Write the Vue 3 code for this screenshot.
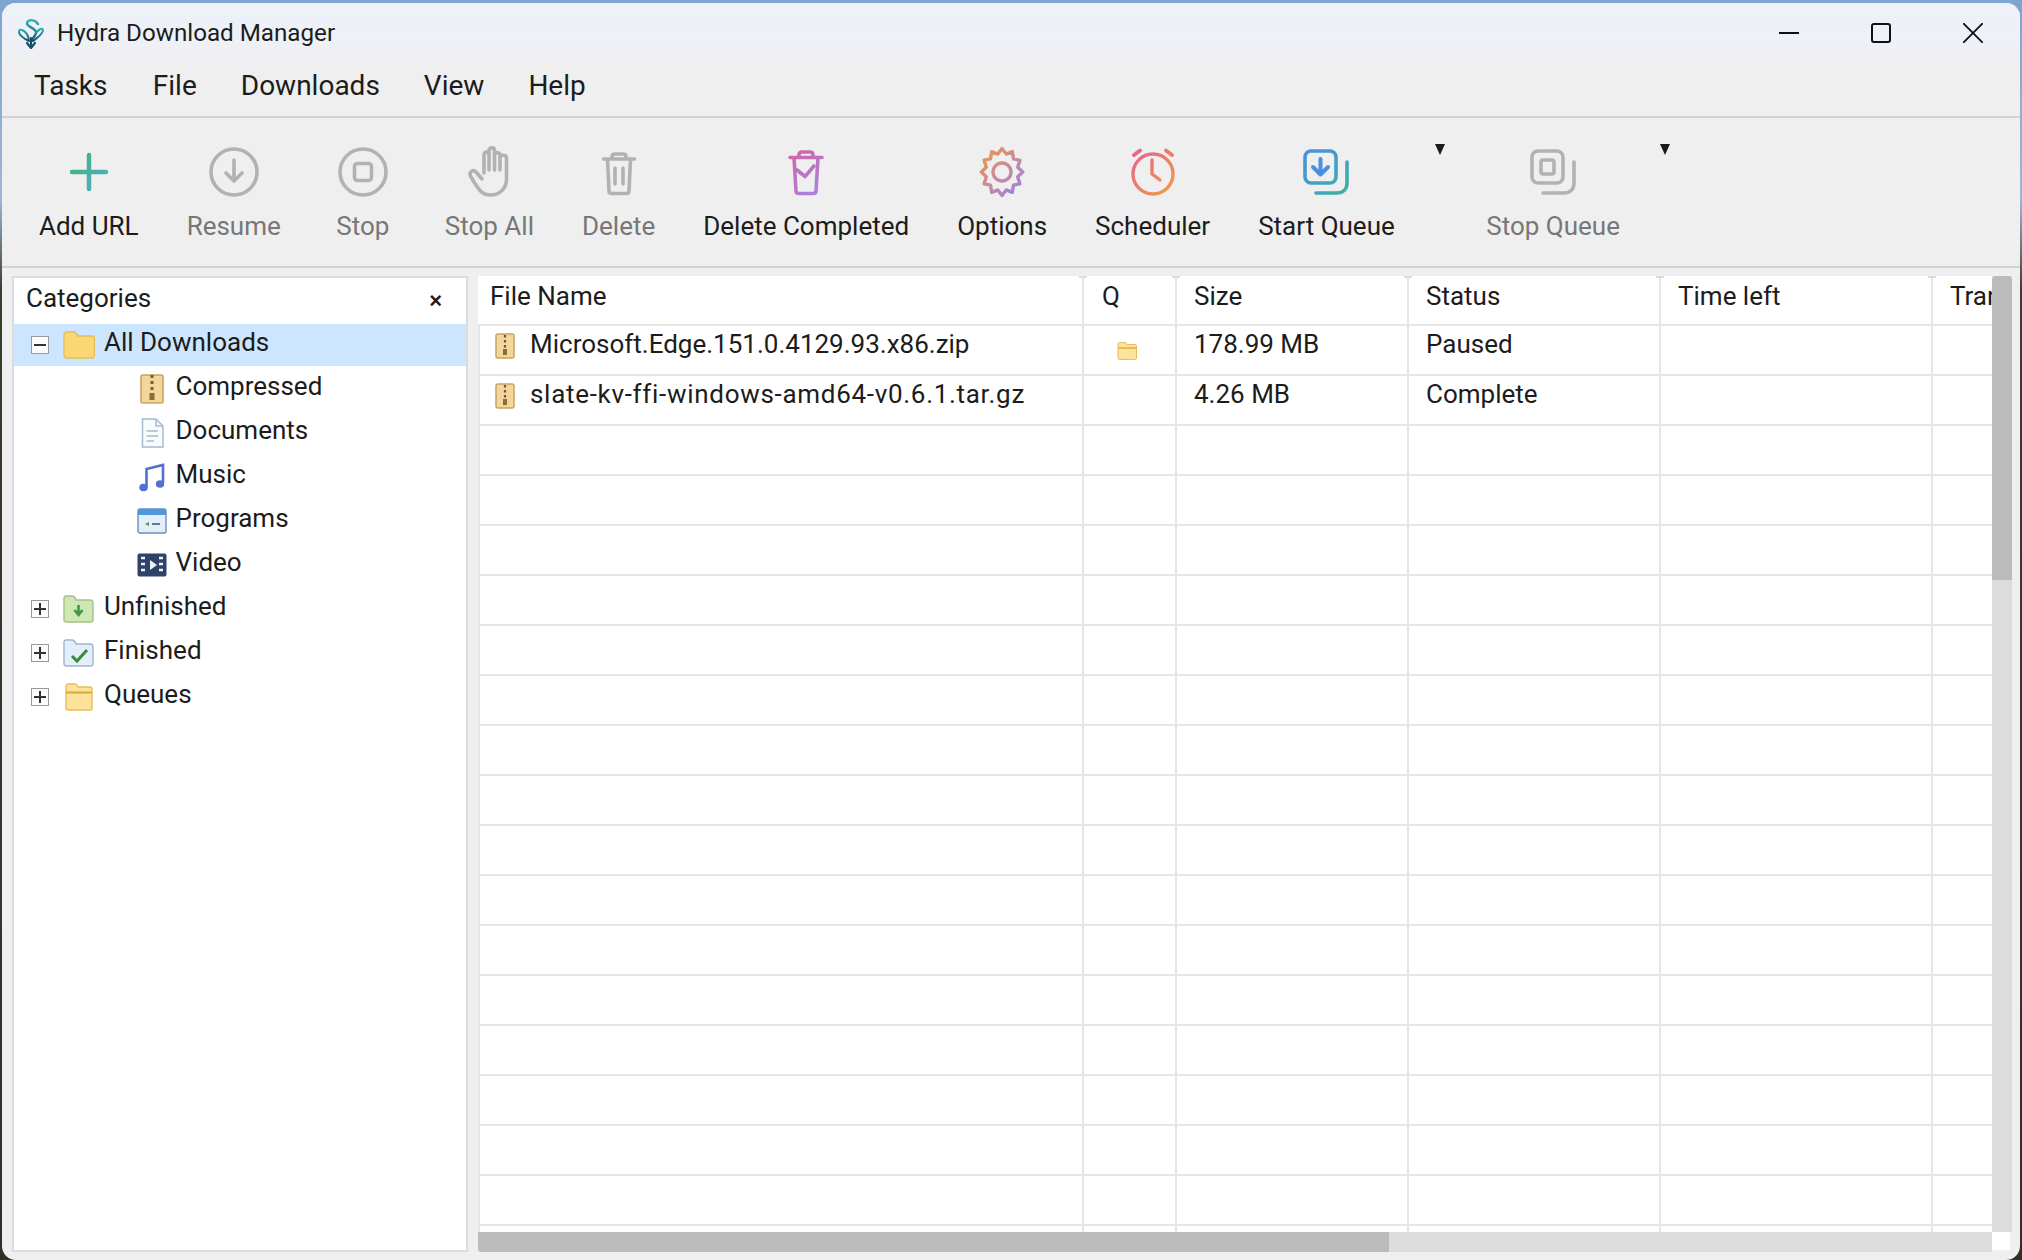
<template>
  <div class="screen">
    <div class="window">
      <header class="titlebar">
        <svg class="logo" width="30" height="32" viewBox="0 0 30 32" fill="none" stroke-linecap="round" stroke-linejoin="round">
          <defs>
            <linearGradient id="logoG" x1="0" y1="0" x2="0" y2="1">
              <stop offset="0" stop-color="#2fb3b0" />
              <stop offset="1" stop-color="#12506e" />
            </linearGradient>
          </defs>
          <path d="M22 7C19 2 12 2 11 6C10 10 21 11 20 16C19 20 16 21 15 25" stroke="url(#logoG)" stroke-width="2.4" />
          <path d="M13 24C8 22 2 17 3 14C4 11 9 14 11 17C12 19 13 21 13 24ZM17 24C21 21 27 17 27 13C26 10 22 13 20 16" stroke="url(#logoG)" stroke-width="2" />
          <path d="M15 21V30M11 26L15 31L19 26" stroke="#14506e" stroke-width="2.2" />
        </svg>
        <span class="title">Hydra Download Manager</span>
        <div class="controls">
          <svg width="20" height="20" viewBox="0 0 20 20" fill="none" stroke="#111" stroke-width="2"><path d="M0 10H20" /></svg>
          <svg width="20" height="20" viewBox="0 0 20 20" fill="none" stroke="#111" stroke-width="2"><rect x="1" y="1" width="18" height="18" rx="2" /></svg>
          <svg width="20" height="20" viewBox="0 0 20 20" fill="none" stroke="#111" stroke-width="1.8"><path d="M0 0L20 20M20 0L0 20" /></svg>
        </div>
      </header>

      <nav class="menubar">
        <span v-for="item in menu" :key="item">{{ item }}</span>
      </nav>

      <div class="toolbar">
        <div class="tool">
          <svg class="ico" viewBox="0 0 52 52" fill="none" stroke-linecap="round">
            <defs>
              <linearGradient id="addG" x1="0" y1="0" x2="1" y2="1">
                <stop offset="0" stop-color="#3fb27f" />
                <stop offset="1" stop-color="#4fb0c6" />
              </linearGradient>
            </defs>
            <path d="M26 9V43M9 26H43" stroke="url(#addG)" stroke-width="4.5" />
          </svg>
          <span>Add URL</span>
        </div>

        <div class="tool off">
          <svg class="ico" viewBox="0 0 52 52" fill="none" stroke="#b2b2b2" stroke-width="3.6" stroke-linecap="round" stroke-linejoin="round">
            <circle cx="26" cy="26" r="23" />
            <path d="M26 14V35M18 27L26 35L34 27" />
          </svg>
          <span>Resume</span>
        </div>

        <div class="tool off">
          <svg class="ico" viewBox="0 0 52 52" fill="none" stroke="#b2b2b2" stroke-width="3.6">
            <circle cx="26" cy="26" r="23" />
            <rect x="17.5" y="17.5" width="17" height="17" rx="3" />
          </svg>
          <span>Stop</span>
        </div>

        <div class="tool off">
          <svg class="ico" viewBox="0 0 52 52" fill="none" stroke="#b2b2b2" stroke-width="3.6" stroke-linecap="round" stroke-linejoin="round">
            <path d="M21 27V9C21 5 26 5 26 9V4.500C26 1 31.500 1 31.500 4.500V9C31.500 6 37 6 37 9V11.500C37 8.500 43.500 8.500 43.500 12V33C43.500 43 36 49 28 49C19 49 16 44 11 36L7.500 30C5.500 26 10 23 13 26L19 33" />
            <path d="M26 8V24M31.500 8V24M37 11V24" />
          </svg>
          <span>Stop All</span>
        </div>

        <div class="tool off">
          <svg class="ico" viewBox="0 0 52 52" fill="none" stroke="#b2b2b2" stroke-width="3.6" stroke-linecap="round" stroke-linejoin="round">
            <path d="M10.500 13H41.500M19 13V10.500C19 9 20 8 22 8H30C32 8 33 9 33 10.500V13M14.500 13L16 45C16 46.500 17 47.500 19 47.500H33C35 47.500 36 46.500 36 45L37.500 13" />
            <path d="M22 22V38M30 22V38" />
          </svg>
          <span>Delete</span>
        </div>

        <div class="tool">
          <svg class="ico" viewBox="0 0 52 52" fill="none" stroke="url(#delG)" stroke-width="3.6" stroke-linecap="round" stroke-linejoin="round">
            <defs>
              <linearGradient id="delG" gradientUnits="userSpaceOnUse" x1="10" y1="4" x2="44" y2="48">
                <stop offset="0" stop-color="#d265a6" />
                <stop offset="1" stop-color="#a585e0" />
              </linearGradient>
            </defs>
            <path d="M10 11.500H42M19 11.500V9C19 7 20 6 22 6H30C32 6 33 7 33 9V11.500M14 11.500L16 45C16 46.500 17 47.500 19 47.500H33C35 47.500 36 46.500 36 45L38 11.500" />
            <path d="M17 24L25 30.500L34 20" />
          </svg>
          <span>Delete Completed</span>
        </div>

        <div class="tool">
          <svg class="ico" viewBox="0 0 52 52" fill="none" stroke="url(#optG)" stroke-width="3.4" stroke-linejoin="round">
            <defs>
              <linearGradient id="optG" gradientUnits="userSpaceOnUse" x1="6" y1="4" x2="46" y2="46">
                <stop offset="0" stop-color="#eb9a4c" />
                <stop offset="1" stop-color="#a37ee6" />
              </linearGradient>
            </defs>
            <path :d="gearPath" />
            <circle cx="26" cy="26" r="9" />
          </svg>
          <span>Options</span>
        </div>

        <div class="tool">
          <svg class="ico" viewBox="0 0 52 52" fill="none" stroke="url(#clkG)" stroke-width="3.4" stroke-linecap="round" stroke-linejoin="round">
            <defs>
              <linearGradient id="clkG" gradientUnits="userSpaceOnUse" x1="6" y1="6" x2="46" y2="46">
                <stop offset="0" stop-color="#e7648f" />
                <stop offset="1" stop-color="#ef9a46" />
              </linearGradient>
            </defs>
            <circle cx="26" cy="28" r="20" />
            <path d="M25 14V28L33 34" />
            <path d="M7 9L13 4.500M39 4.500L45 9" stroke-width="4" />
          </svg>
          <span>Scheduler</span>
        </div>

        <div class="tool queue">
          <svg class="ico" viewBox="0 0 52 52" fill="none" stroke-width="3.6" stroke-linecap="round" stroke-linejoin="round">
            <defs>
              <linearGradient id="quG" gradientUnits="userSpaceOnUse" x1="6" y1="4" x2="46" y2="48">
                <stop offset="0" stop-color="#4a8fe0" />
                <stop offset="1" stop-color="#3cb1a5" />
              </linearGradient>
            </defs>
            <rect x="5" y="5" width="31" height="32" rx="6" stroke="url(#quG)" />
            <path d="M16 47H37C43 47 47 43 47 37V16" stroke="url(#quG)" />
            <path d="M20.500 13V28M13 21L20.500 28.500L28 21" stroke="#4a8fe0" stroke-width="4" />
          </svg>
          <span>Start Queue</span>
          <i class="caret"></i>
        </div>

        <div class="tool queue off">
          <svg class="ico" viewBox="0 0 52 52" fill="none" stroke="#b2b2b2" stroke-width="3.6" stroke-linecap="round" stroke-linejoin="round">
            <rect x="5" y="5" width="31" height="32" rx="6" />
            <path d="M16 47H37C43 47 47 43 47 37V16" />
            <rect x="14" y="14" width="13" height="14" rx="2" />
          </svg>
          <span>Stop Queue</span>
          <i class="caret"></i>
        </div>
      </div>

      <main class="content">
        <aside class="categories">
          <div class="cat-head">
            <span>Categories</span>
            <b class="cat-close">×</b>
          </div>

          <div class="node selected">
            <i class="box"><i class="dash"></i></i>
            <svg class="node-ico" viewBox="0 0 32 28">
              <path d="M1 4C1 2 2 1 4 1H11C12.500 1 13 2 14 3.500L15 5H29C30.500 5 31.500 6 31.500 7.500V24C31.500 26 30.500 27 29 27H4C2 27 1 26 1 24Z" fill="#fad675" stroke="#e8bd56" stroke-width="1.400" />
            </svg>
            <span>All Downloads</span>
          </div>

          <div class="leaf">
            <svg class="leaf-ico" viewBox="0 0 30 30">
              <rect x="4" y="1" width="22" height="28" rx="2" fill="#f3d69b" stroke="#c9a461" stroke-width="1.600" />
              <path d="M15 1V17" stroke="#7a5f33" stroke-width="3" stroke-dasharray="3 3" />
              <rect x="12.500" y="19" width="5" height="7" fill="#8d6c37" />
            </svg>
            <span>Compressed</span>
          </div>

          <div class="leaf">
            <svg class="leaf-ico" viewBox="0 0 30 30" fill="none" stroke="#a9bacd" stroke-width="1.500">
              <path d="M5.500 1H19L26 8V29H5.500Z" fill="#f8fafc" />
              <path d="M19 1V8H26" />
              <path d="M9.500 13H21M9.500 18H21M9.500 23H17" />
            </svg>
            <span>Documents</span>
          </div>

          <div class="leaf">
            <svg class="leaf-ico" viewBox="0 0 30 30">
              <path d="M9.500 25V7L26 3V21" fill="none" stroke="#5270d4" stroke-width="2.600" />
              <ellipse cx="6.500" cy="25.500" rx="4.200" ry="3.800" fill="#5270d4" />
              <ellipse cx="23" cy="22" rx="4.200" ry="3.800" fill="#5270d4" />
            </svg>
            <span>Music</span>
          </div>

          <div class="leaf">
            <svg class="leaf-ico" viewBox="0 0 30 26">
              <rect x="1" y="1" width="28" height="24" rx="2" fill="#e3eefa" stroke="#6b8fb5" stroke-width="1.400" />
              <path d="M1 3C1 2 2 1 3 1H27C28 1 29 2 29 3V7H1Z" fill="#4f97e0" />
              <path d="M12 14L8 16L12 18Z" fill="#43a047" />
              <path d="M15 16H23" stroke="#5d7a97" stroke-width="2" />
            </svg>
            <span>Programs</span>
          </div>

          <div class="leaf">
            <svg class="leaf-ico" viewBox="0 0 30 24">
              <rect x="0.500" y="0.500" width="29" height="23" rx="2" fill="#2f4269" />
              <path d="M13 7L20 12L13 17Z" fill="#eef2f7" />
              <path d="M4 5H8M4 11H8M4 17H8M22 5H26M22 11H26M22 17H26" stroke="#eef2f7" stroke-width="2.600" />
            </svg>
            <span>Video</span>
          </div>

          <div class="node">
            <i class="box"><i class="dash"></i><i class="bar"></i></i>
            <svg class="node-ico" viewBox="0 0 32 28">
              <path d="M1 3C1 2 2 1 3 1H9C11 1 12 2 13 5H27C29 5 30 6 30 8V25C30 26 29 27 27 27H4C2 27 1 26 1 25Z" fill="#cfe6b5" stroke="#a3c484" stroke-width="1.400" />
              <path d="M15.500 10V18M11.500 15L15.500 20L19.500 15" fill="none" stroke="#3b9a43" stroke-width="2.600" />
            </svg>
            <span>Unfinished</span>
          </div>

          <div class="node">
            <i class="box"><i class="dash"></i><i class="bar"></i></i>
            <svg class="node-ico" viewBox="0 0 32 28">
              <path d="M1 3C1 2 2 1 3 1H9C11 1 12 2 13 5H27C29 5 30 6 30 8V25C30 26 29 27 27 27H4C2 27 1 26 1 25Z" fill="#e3eefa" stroke="#9fb5cc" stroke-width="1.400" />
              <path d="M9 17L14 22L24 11" fill="none" stroke="#388e3c" stroke-width="3" />
            </svg>
            <span>Finished</span>
          </div>

          <div class="node">
            <i class="box"><i class="dash"></i><i class="bar"></i></i>
            <svg class="node-ico" viewBox="0 0 32 28">
              <path d="M3 3C3 2 4 1 5 1H12C13 1 14 2 15 4H27C28.500 4 29 5 29 6V25C29 26 28 27 27 27H5C4 27 3 26 3 25Z" fill="#fce29a" stroke="#e8bd56" stroke-width="1.400" />
              <path d="M3 9.500H29" stroke="#d9a93f" stroke-width="2" />
            </svg>
            <span>Queues</span>
          </div>
        </aside>

        <section class="grid-wrap">
          <div class="table">
            <div class="row head">
              <div v-for="col in columns" :key="col.name" class="cell" :style="{ width: col.width + 'px' }">{{ col.name }}</div>
            </div>
            <div v-for="(row, i) in rows" :key="i" class="row">
              <div class="cell first" :class="{ spaced: row.spaced }" :style="{ width: columns[0].width + 'px' }">
                <svg v-if="row.name" class="zip" viewBox="0 0 20 26">
                  <rect x="1" y="1" width="18" height="24" rx="2" fill="#f3d69b" stroke="#c9a461" stroke-width="1.500" />
                  <path d="M10 2V15" stroke="#6d5630" stroke-width="2.200" stroke-dasharray="2.500 2.500" />
                  <rect x="8" y="16" width="4" height="6" fill="#8d6c37" />
                </svg>
                {{ row.name }}
              </div>
              <div class="cell q" :style="{ width: columns[1].width + 'px' }">
                <svg v-if="row.queued" class="q-ico" viewBox="0 0 20 18">
                  <path d="M1 2C1 1 2 0.500 3 0.500H8C9 0.500 9.500 1 10 2.500H18C19 2.500 19.500 3 19.500 4V16C19.500 17 19 17.500 18 17.500H3C2 17.500 1 17 1 16Z" fill="#fce29a" stroke="#e5bd5b" />
                  <path d="M1 6H19.500" stroke="#dcae45" stroke-width="1.400" />
                </svg>
              </div>
              <div class="cell" :style="{ width: columns[2].width + 'px' }">{{ row.size }}</div>
              <div class="cell" :style="{ width: columns[3].width + 'px' }">{{ row.status }}</div>
              <div class="cell" :style="{ width: columns[4].width + 'px' }"></div>
              <div class="cell" :style="{ width: columns[5].width + 'px' }"></div>
            </div>
          </div>
          <div class="vbar"><div class="vthumb"></div></div>
          <div class="hbar"><div class="hthumb"></div></div>
          <div class="corner"></div>
        </section>
      </main>
    </div>
  </div>
</template>

<script setup>
const menu = ["Tasks", "File", "Downloads", "View", "Help"];

const columns = [
  { name: "File Name", width: 606 },
  { name: "Q", width: 93 },
  { name: "Size", width: 232 },
  { name: "Status", width: 252 },
  { name: "Time left", width: 272 },
  { name: "Transfer rate", width: 200 },
];

const rows = [
  { name: "Microsoft.Edge.151.0.4129.93.x86.zip", queued: true, size: "178.99 MB", status: "Paused" },
  { name: "slate-kv-ffi-windows-amd64-v0.6.1.tar.gz", spaced: true, size: "4.26 MB", status: "Complete" },
  ...Array.from({ length: 18 }, () => ({})),
];

// 12 point wavy outline for the options cog
const gearPath = (() => {
  let d = "";
  for (let i = 0; i < 24; i++) {
    const r = i % 2 ? 18.5 : 23.5;
    const a = (i * Math.PI) / 12 - Math.PI / 2;
    d += (i ? "L" : "M") + (26 + 0.88 * r * Math.cos(a)).toFixed(1) + " " + (26 + r * Math.sin(a)).toFixed(1);
  }
  return d + "Z";
})();
</script>

<style scoped>
.screen {
  width: 2022px;
  height: 1260px;
  padding: 3px 2px 0;
  box-sizing: border-box;
  overflow: hidden;
  background: linear-gradient(#7ea4d0 0, #9db6d4 200px, #3d3b2e 290px, #2f2f28 100%);
  font-family: Roboto, "Liberation Sans", sans-serif;
  color: #1c1c1c;
}
.window {
  height: 100%;
  display: flex;
  flex-direction: column;
  border-radius: 14px;
  overflow: hidden;
  background: #efefef;
}
.titlebar {
  height: 59px;
  flex: none;
  display: flex;
  align-items: center;
  padding-left: 14px;
  background: linear-gradient(#edf1f8 0, #eef1f7 38px, #efefef 59px);
}
.logo {
  flex: none;
}
.title {
  margin-left: 11px;
  font-size: 24.2px;
}
.controls {
  margin-left: auto;
  display: flex;
  gap: 72px;
  padding-right: 37px;
}
.menubar {
  height: 56px;
  flex: none;
  box-sizing: border-box;
  padding: 0 0 8px 32px;
  display: flex;
  align-items: center;
  gap: 44px;
  font-size: 28px;
  border-bottom: 2px solid #d2d2d2;
}
.menubar span:first-child {
  margin-right: 1.300px;
}
.toolbar {
  height: 150px;
  flex: none;
  box-sizing: border-box;
  padding: 28px 0 0 37px;
  display: flex;
  gap: 48px;
  border-bottom: 2px solid #d2d2d2;
}
.tool {
  position: relative;
  min-width: 68px;
  display: flex;
  flex-direction: column;
  align-items: center;
  gap: 13px;
  font-size: 26px;
  white-space: nowrap;
}
.tool.off {
  color: #777;
}
.tool.queue {
  margin-right: 43.500px;
}
.ico {
  width: 52px;
  height: 52px;
}
.caret {
  position: absolute;
  right: -50px;
  top: -2px;
  border-left: 5px solid transparent;
  border-right: 5px solid transparent;
  border-top: 11px solid #1a1a1a;
}
.content {
  flex: 1;
  min-height: 0;
  display: flex;
  gap: 10px;
  padding: 8px 8px 8px 10px;
}
.categories {
  width: 456px;
  flex: none;
  box-sizing: border-box;
  background: #fff;
  border: 2px solid #dcdcdc;
  font-size: 26px;
}
.cat-head {
  height: 46px;
  box-sizing: border-box;
  display: flex;
  align-items: center;
  justify-content: space-between;
  padding: 0 24px 6px 12px;
}
.cat-close {
  margin-top: 6px;
  font-size: 22px;
  font-weight: 700;
  font-family: "Liberation Sans", sans-serif;
}
.node,
.leaf {
  height: 44px;
  display: flex;
  align-items: center;
}
.node {
  padding-left: 17px;
}
.node.selected {
  height: 42px;
  box-sizing: border-box;
  padding-top: 2px;
  margin-bottom: 2px;
  background: #cce6ff;
}
.leaf {
  padding-left: 123px;
}
.box {
  position: relative;
  width: 18px;
  height: 18px;
  box-sizing: border-box;
  border: 1.500px solid #9a9a9a;
  background: #fdfdfd;
  flex: none;
  margin-top: -2px;
}
.dash {
  position: absolute;
  left: 2px;
  right: 2px;
  top: 6.500px;
  height: 2px;
  background: #333;
}
.bar {
  position: absolute;
  top: 2px;
  bottom: 2px;
  left: 6.500px;
  width: 2px;
  background: #333;
}
.node-ico {
  width: 32px;
  height: 28px;
  margin: -2px 9px 0 14px;
  flex: none;
}
.leaf-ico {
  width: 30px;
  height: 30px;
  margin: -2px 8.500px 0 0;
  flex: none;
}
.node span,
.leaf span {
  position: relative;
  top: -4px;
}
.grid-wrap {
  flex: 1;
  min-width: 0;
  display: grid;
  grid-template-columns: 1fr 20px;
  grid-template-rows: 1fr 20px;
}
.table {
  overflow: hidden;
  background: #fff;
  font-size: 26px;
  font-variant-ligatures: none;
}
.row {
  display: flex;
  height: 50px;
  white-space: nowrap;
}
.cell {
  position: relative;
  flex: none;
  box-sizing: border-box;
  padding: 3px 0 0 17px;
  border-right: 2px solid #e6e6e6;
  border-bottom: 2px solid #e6e6e6;
  line-height: 30px;
}
.row.head .cell {
  padding-top: 5px;
}
.row.head .cell:first-child {
  padding-left: 12px;
}
.row.head .cell:nth-child(2) {
  padding-left: 18px;
}
.row.head .cell::after {
  content: "";
  position: absolute;
  top: 0;
  right: -5px;
  width: 8px;
  height: 2px;
  background: #dcdcdc;
}
.cell.first {
  padding-left: 50px;
  border-left: 2px solid #e6e6e6;
}
.cell.spaced {
  letter-spacing: 0.7px;
}
.zip {
  position: absolute;
  left: 15px;
  top: 7px;
  width: 20px;
  height: 26px;
}
.q-ico {
  position: absolute;
  left: 33px;
  top: 16px;
  width: 20px;
  height: 18px;
}
.vbar {
  background: #dcdcdc;
}
.vthumb {
  height: 304px;
  background: #bbb;
  border-radius: 4px 4px 0 0;
}
.hbar {
  background: #dcdcdc;
}
.hthumb {
  width: 911px;
  height: 100%;
  background: #bbb;
  border-radius: 0 0 0 4px;
}
.corner {
  background: linear-gradient(#fff 18px, #efefef 18px);
  margin-right: 2px;
}
</style>

<style>
body {
  background: #2f2f28;
}
</style>
